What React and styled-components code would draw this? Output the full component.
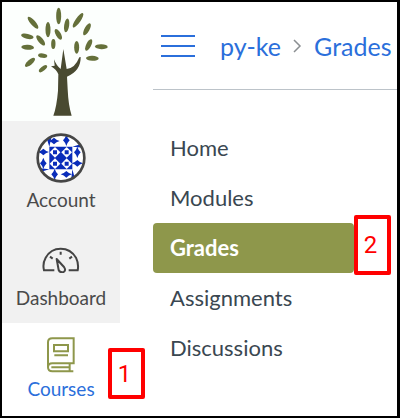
import React from "react";
import styled, { createGlobalStyle } from "styled-components";

const GlobalStyle = createGlobalStyle`
  *, *::before, *::after { box-sizing: border-box; }
  body { margin: 0; background: #fff; font-family: Lato, "Liberation Sans", sans-serif; }
`;

const Frame = styled.div`
  display: flex;
  min-height: 100vh;
  border: 2px solid #000;
  border-right-width: 3px;
  background: #fff;
`;

const Sidebar = styled.nav`
  flex: 0 0 118px;
  display: flex;
  flex-direction: column;
`;

const LogoLink = styled.a`
  display: block;
  background: #fcfffd;
  svg { display: block; width: 100%; }
`;

const SideItem = styled.a`
  position: relative;
  display: flex;
  flex-direction: column;
  align-items: center;
  gap: ${(p) => p.$gap}px;
  padding: ${(p) => p.$top}px 0 11px;
  font-size: 19px;
  line-height: 28px;
  text-decoration: none;
  color: ${(p) => (p.$active ? "#2b6fdb" : "#4a4a4a")};
  background: ${(p) => (p.$active ? "#fff" : "#f1f1f1")};
  svg { display: block; }
`;

const Main = styled.main`
  flex: 1;
  min-width: 0;
  padding-left: 33px;
`;

const TopBar = styled.header`
  display: flex;
  align-items: center;
  height: 88px;
  padding-left: 8px;
  border-bottom: 1px solid #bcc3c9;
`;

const MenuButton = styled.button`
  display: flex;
  padding: 0;
  border: 0;
  background: none;
`;

const Breadcrumbs = styled.nav`
  display: flex;
  align-items: center;
  gap: 12px;
  margin-left: 25px;
  font-size: 25px;
  line-height: 32px;
  white-space: nowrap;
`;

const Crumb = styled.a`
  color: #2b6fdb;
  text-decoration: none;
`;

const CourseNav = styled.ul`
  list-style: none;
  margin: 33px 43px 0 0;
  padding: 0;
`;

const CourseItem = styled.li`
  position: relative;
`;

const CourseLink = styled.a`
  display: block;
  padding: 0 17px;
  border-radius: 4px;
  font-size: 22px;
  line-height: 50px;
  text-decoration: none;
  color: ${(p) => (p.$active ? "#fff" : "#3a4751")};
  font-weight: ${(p) => (p.$active ? 700 : 400)};
  background: ${(p) => (p.$active ? "#8e974b" : "transparent")};
`;

const Callout = styled.span`
  position: absolute;
  display: flex;
  align-items: center;
  justify-content: center;
  width: 37px;
  padding-right: 4px;
  border: 4px solid #f00;
  border-radius: 2px;
  background: #fff;
  color: #f00;
  font: 24px/1 Roboto, sans-serif;
`;

const StepOne = styled(Callout)`
  top: 25px;
  left: 106px;
  height: 51px;
`;

const StepTwo = styled(Callout)`
  top: -8px;
  left: 100%;
  height: 60px;
`;

const leaves = [
  [176, 48, 25, 90], [99, 68, 23, 49], [144, 89, 23, 90], [200, 76, 21, 98],
  [234, 61, 26, 125], [261, 88, 20, 119], [175, 103, 18, 60], [122, 121, 19, 51],
  [82, 109, 19, 13], [83, 142, 19, 3], [160, 132, 15, 91], [230, 142, 19, 90],
  [266, 135, 19, 116], [304, 140, 19, 2], [277, 175, 19, 2], [128, 167, 14, 8],
  [90, 187, 19, 139], [129, 206, 15, 141],
];

const TreeLogo = () => (
  <svg viewBox="6 6 354 357" role="img" aria-label="Tree">
    {leaves.map(([x, y, r, a]) => (
      <ellipse key={`${x}-${y}`} rx={r} ry={r > 16 ? 7.5 : 6.5} fill="#65703a"
        transform={`translate(${x} ${y}) rotate(${a})`} />
    ))}
    <path fill="#494a31" d="M190 147 L200 207 Q225 205 238 172 L242 171 Q243 212 201 230 L203 268 Q205 316 215 347 L160 347 Q170 320 174 272 L175 223 Q169 208 153 199 L164 197 L162 178 Q169 197 182 207 Z" />
  </svg>
);

const leafDiamonds = [
  [53, 23, 0], [90, 21, 90], [123, 57, 90], [123, 90, 0],
  [90, 123, 0], [55, 123, 90], [21, 90, 90], [21, 56, 0],
];

const Avatar = () => (
  <svg width="50" height="50" viewBox="-1 -1 150 150" aria-hidden="true">
    <clipPath id="avatar-clip"><circle cx="74" cy="74" r="68" /></clipPath>
    <circle cx="74" cy="74" r="70" fill="#fff" />
    <g clipPath="url(#avatar-clip)" fill="#0a2dba">
      <path d="M39 40H108V108H39Z M28 5 L39 40 L47 5Z M108 40L142 30V43Z M108 108L118 143H104Z M39 108L5 118V104Z" />
      {leafDiamonds.map(([x, y, a]) => (
        <path key={`${x}-${y}`} d="M-17 0Q-7 -3 0 -10Q7 -3 17 0Q7 3 0 10Q-7 3 -17 0Z"
          transform={`translate(${x} ${y}) rotate(${a})`} />
      ))}
      {[[56, 57], [91, 57], [56, 91], [91, 91]].map(([x, y]) => (
        <g key={`${x}-${y}`} transform={`translate(${x} ${y})`}>
          <path fill="#fff" d="M0 -16L16 0L0 16L-16 0Z" />
          <path d="M-6 -6H6V6H-6Z" />
        </g>
      ))}
    </g>
    <circle cx="74" cy="74" r="70" fill="none" stroke="#464646" strokeWidth="8" />
  </svg>
);

const Gauge = () => (
  <svg width="38" height="28" viewBox="0 0 114 84" fill="none" stroke="#444" strokeWidth="6" aria-hidden="true">
    <path d="M37 76H6Q1 56 11 38Q26 11 56 11Q86 11 102 38Q111 57 107 76H80" />
    <path d="M56 20V29M24 35L32 41M90 35L82 41" />
    <path strokeLinejoin="round" d="M44 42L66 66Q73 76 65 81Q54 84 50 75Z" />
  </svg>
);

const Book = () => (
  <svg width="28" height="36" viewBox="0 0 84 108" fill="none" stroke="#8e974b" strokeWidth="6" aria-hidden="true">
    <path d="M3 91V16Q3 4 16 4H80V79H16Q3 79 3 91Q3 103 16 103H79M68 79V103M13 91H67" />
    <path d="M21 24H63V43H21ZM22 55H63" />
  </svg>
);

const pages = ["Home", "Modules", "Grades", "Assignments", "Discussions"];

export default function App() {
  return (
    <>
      <GlobalStyle />
      <Frame>
        <Sidebar aria-label="Global navigation">
          <LogoLink href="#" aria-label="Home page"><TreeLogo /></LogoLink>
          <SideItem href="#account" $top={12} $gap={3}><Avatar />Account</SideItem>
          <SideItem href="#dashboard" $top={20} $gap={11}><Gauge />Dashboard</SideItem>
          <SideItem href="#courses" $top={14} $gap={2} $active aria-current="page">
            <Book />Courses
            <StepOne>1</StepOne>
          </SideItem>
        </Sidebar>
        <Main>
          <TopBar>
            <MenuButton type="button" aria-label="Course menu">
              <svg width="34" height="24" viewBox="0 0 34 24" stroke="#2b6fdb" strokeWidth="2">
                <path d="M0 2H34M0 12H34M0 22H34" />
              </svg>
            </MenuButton>
            <Breadcrumbs aria-label="Breadcrumb">
              <Crumb href="#py-ke">py-ke</Crumb>
              <svg width="9" height="14" viewBox="0 0 9 14" fill="none" stroke="#8b8f92" aria-hidden="true">
                <path d="M1 1L7 7L1 13" strokeWidth="1.5" />
              </svg>
              <Crumb href="#grades">Grades</Crumb>
            </Breadcrumbs>
          </TopBar>
          <CourseNav>
            {pages.map((name) => (
              <CourseItem key={name}>
                <CourseLink href={`#${name.toLowerCase()}`} $active={name === "Grades"}>{name}</CourseLink>
                {name === "Grades" && <StepTwo>2</StepTwo>}
              </CourseItem>
            ))}
          </CourseNav>
        </Main>
      </Frame>
    </>
  );
}
